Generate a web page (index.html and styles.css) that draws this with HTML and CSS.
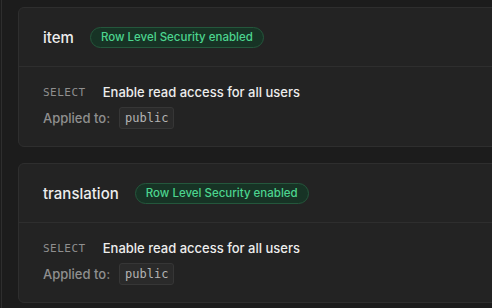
FILE: index.html
```html
<!DOCTYPE html>
<html lang="en">

<head>
    <meta charset="UTF-8">
    <meta name="viewport" content="width=device-width, initial-scale=1.0">
    <title>Policies</title>
    <link rel="stylesheet" href="styles.css">
</head>

<body>
    <div class="page">
        <div class="table-list">
            <section class="table-card">
                <header class="table-card__header">
                    <h2 class="table-card__name">item</h2>
                    <span class="badge">Row Level Security enabled</span>
                </header>
                <div class="table-card__body">
                    <div class="policy">
                        <span class="policy__command">SELECT</span>
                        <span class="policy__name">Enable read access for all users</span>
                    </div>
                    <div class="policy__roles">
                        <span class="policy__label">Applied to:</span>
                        <code class="role">public</code>
                    </div>
                </div>
            </section>
            <section class="table-card">
                <header class="table-card__header">
                    <h2 class="table-card__name">translation</h2>
                    <span class="badge">Row Level Security enabled</span>
                </header>
                <div class="table-card__body">
                    <div class="policy">
                        <span class="policy__command">SELECT</span>
                        <span class="policy__name">Enable read access for all users</span>
                    </div>
                    <div class="policy__roles">
                        <span class="policy__label">Applied to:</span>
                        <code class="role">public</code>
                    </div>
                </div>
            </section>
        </div>
    </div>
</body>

</html>
```

FILE: styles.css
```css
:root {
    --page-bg: #1c1c1c;
    --card-bg: #232323;
    --border-color: #2e2e2e;
    --text-color: #ededed;
    --muted-color: #8f8f8f;
    --green-text: #4cd58f;
    --green-bg: #173325;
    --green-border: #24573c;
    --code-bg: #2a2a2a;
    --code-border: #363636;
}

body {
    margin: 0;
    padding: 0;
    background: var(--page-bg);
    color: var(--text-color);
    font-family: 'Inter', 'Noto Sans', sans-serif;
    overflow: hidden;
    height: 308px;
}

.page {
    margin-left: 1px;
    border-left: 1px solid var(--border-color);
    height: 100%;
    padding: 7px 0 0 16px;
    box-sizing: border-box;
}

.table-list {
    display: flex;
    flex-direction: column;
    gap: 16px;
    width: 520px;
}

.table-card {
    background: var(--card-bg);
    border: 1px solid var(--border-color);
    border-radius: 6px;
}

.table-card__header {
    display: flex;
    align-items: center;
    gap: 16px;
    height: 58px;
    padding: 0 24px;
    border-bottom: 1px solid var(--border-color);
}

.table-card__name {
    margin: 0;
    font-size: 15px;
    font-weight: 500;
    color: var(--text-color);
}

.badge {
    display: inline-flex;
    align-items: center;
    height: 19px;
    padding: 0 10px;
    border: 1px solid var(--green-border);
    border-radius: 999px;
    background: var(--green-bg);
    color: var(--green-text);
    font-size: 11.5px;
    font-weight: 500;
}

.table-card__body {
    padding: 15px 24px 17px;
    display: flex;
    flex-direction: column;
    gap: 5px;
}

.policy {
    display: flex;
    align-items: center;
    gap: 17px;
    height: 20px;
}

.policy__command {
    font-family: 'DejaVu Sans Mono', monospace;
    font-size: 11px;
    letter-spacing: 0.5px;
    color: var(--muted-color);
}

.policy__name {
    font-size: 13px;
    font-weight: 500;
    color: var(--text-color);
}

.policy__roles {
    display: flex;
    align-items: center;
    gap: 9px;
    height: 22px;
}

.policy__label {
    font-size: 13px;
    font-weight: 500;
    color: var(--muted-color);
}

.role {
    display: inline-flex;
    align-items: center;
    height: 20px;
    padding: 0 5px;
    background: var(--code-bg);
    border: 1px solid var(--code-border);
    border-radius: 3px;
    font-family: 'DejaVu Sans Mono', monospace;
    font-size: 12px;
    color: #b4b4b4;
}
```
